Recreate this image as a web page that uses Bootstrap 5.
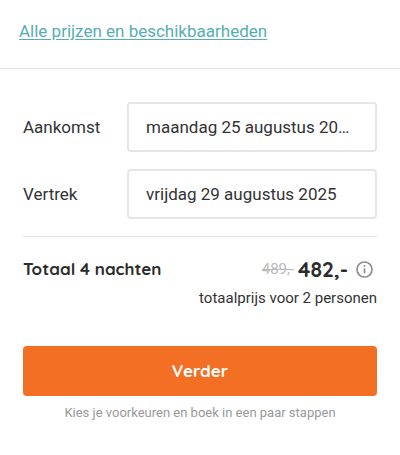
<!DOCTYPE html>
<html lang="nl">
<head>
<meta charset="utf-8">
<meta name="viewport" content="width=device-width, initial-scale=1">
<title>Prijzen en beschikbaarheden</title>
<link href="https://cdn.jsdelivr.net/npm/bootstrap@5.3.0/dist/css/bootstrap.min.css" rel="stylesheet">
<style>
body { font-family: Roboto, sans-serif; font-size: 17px; line-height: 24px; color: #333; background: #fff; }
.top-bar { padding: 19px 19px 25px; border-bottom: 1px solid #e4e4e4; }
.top-bar a { color: #55aeb2; text-decoration: underline; text-underline-offset: 2px; }
.booking { padding: 33px 23px 24px; }
.date-label { flex: 0 0 104px; }
.date-field { height: 50px; border: 2px solid #e6e6e6; border-radius: 4px; padding: 0 24px 0 17px; font-size: 17px; color: #333; text-overflow: ellipsis; }
.date-rows { gap: 17px; padding-bottom: 17px; border-bottom: 1px solid #e4e4e4; }
.display-font { font-family: Quicksand, Lato, sans-serif; font-weight: 700; color: #2b2b2b; }
.total-row { padding-top: 17px; height: 47px; }
.total-label { font-size: 17px; }
.old-price { color: #bbb; font-size: 15px; }
.new-price { font-size: 21px; }
.info-btn { width: 17px; height: 17px; color: #8e8e8e; margin: 0 4px 0 8px; }
.per-persons { font-size: 15px; line-height: 28px; }
.next-btn { --bs-btn-bg: #f26f23; --bs-btn-color: #fff; --bs-btn-hover-bg: #dc6018; --bs-btn-hover-color: #fff; --bs-btn-border-radius: 4px; height: 50px; margin-top: 34px; border: 0; font-family: Quicksand, Lato, sans-serif; font-weight: 700; font-size: 17px; }
.hint { color: #999; font-size: 13px; margin-top: 5px; }
</style>
<script src="https://cdn.jsdelivr.net/npm/bootstrap@5.3.0/dist/js/bootstrap.bundle.min.js" defer></script>
</head>
<body>
<div class="top-bar"><a href="#prijzen">Alle prijzen en beschikbaarheden</a></div>
<form class="booking">
  <div class="date-rows d-flex flex-column">
    <div class="d-flex align-items-center">
      <label class="date-label" for="arrival">Aankomst</label>
      <input class="date-field form-control" id="arrival" type="text" readonly value="maandag 25 augustus 2025">
    </div>
    <div class="d-flex align-items-center">
      <label class="date-label" for="departure">Vertrek</label>
      <input class="date-field form-control" id="departure" type="text" readonly value="vrijdag 29 augustus 2025">
    </div>
  </div>
  <div class="total-row d-flex justify-content-between align-items-center">
    <span class="total-label display-font">Totaal 4 nachten</span>
    <div class="d-flex align-items-center">
      <del class="old-price me-1">489,-</del>
      <span class="new-price display-font">482,-</span>
      <button class="info-btn btn p-0 border-0 d-flex" type="button" aria-label="Prijsinformatie">
        <svg width="17" height="17" viewBox="0 0 17 17" fill="none" stroke="currentColor" aria-hidden="true"><circle cx="8.5" cy="8.5" r="7.5" stroke-width="1.7"/><path d="M8.5 7.3v5" stroke-width="1.7"/><circle cx="8.5" cy="5.1" r="1" fill="currentColor" stroke="none"/></svg>
      </button>
    </div>
  </div>
  <div class="per-persons text-end">totaalprijs voor 2 personen</div>
  <button class="next-btn btn w-100" type="submit">Verder</button>
  <div class="hint text-center">Kies je voorkeuren en boek in een paar stappen</div>
</form>
</body>
</html>
